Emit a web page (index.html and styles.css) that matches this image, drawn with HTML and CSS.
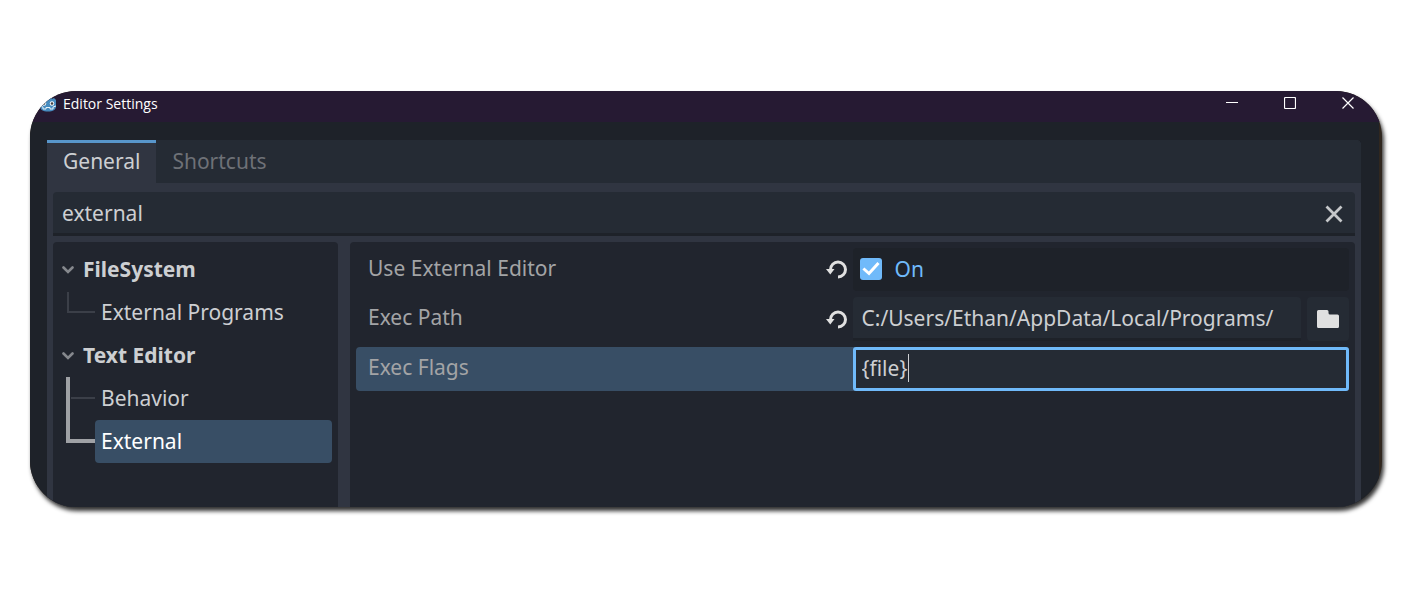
FILE: index.html
```html
<!DOCTYPE html>
<html lang="en">
<head>
<meta charset="utf-8">
<title>Editor Settings</title>
<link rel="stylesheet" href="styles.css">
</head>
<body>
<main class="window">
  <header class="titlebar">
    <svg class="logo" width="18" height="18" viewBox="0 0 18 18" aria-hidden="true">
      <path d="M1 5 3 3l2 1 1-2.500 2.500 1h1l2.500-1L13 4l2-1 2 2v6c0 4-3 5.500-8 5.500S1 15 1 11z" fill="#478cbf"/>
      <path d="M1 11l3 1v2h3v-1.500h4V14h3v-2l3-1" fill="none" stroke="#e6f1f8" stroke-width="1"/>
      <circle cx="5" cy="8.500" r="2.200" fill="#fff"/><circle cx="13" cy="8.500" r="2.200" fill="#fff"/>
      <circle cx="5" cy="8.500" r="1.300" fill="#414042"/><circle cx="13" cy="8.500" r="1.300" fill="#414042"/>
    </svg>
    <h1 class="title">Editor Settings</h1>
    <button class="winbtn" aria-label="Minimize"><svg width="12" height="12" viewBox="0 0 12 12"><path d="M0 5.500h12" stroke="#fff"/></svg></button>
    <button class="winbtn" aria-label="Maximize"><svg width="12" height="12" viewBox="0 0 12 12"><rect x=".5" y=".5" width="11" height="11" rx="1" fill="none" stroke="#fff" stroke-width="1.200"/></svg></button>
    <button class="winbtn" aria-label="Close"><svg width="12" height="12" viewBox="0 0 12 12"><path d="M.5.5l11 11M11.500.5l-11 11" stroke="#fff" stroke-width="1.200"/></svg></button>
  </header>
  <div class="body">
    <section class="panel">
      <nav class="tabs">
        <button class="tab active">General</button>
        <button class="tab">Shortcuts</button>
      </nav>
      <div class="content">
        <div class="search">
          <input class="search-input" type="text" aria-label="Filter settings" value="external">
          <button class="clear" aria-label="Clear"><svg width="18" height="18" viewBox="0 0 18 18"><path d="M1.500 1.500l15 15M16.500 1.500l-15 15" stroke="#c6c8ca" stroke-width="2.800"/></svg></button>
        </div>
        <div class="split">
          <ul class="tree">
            <li>
              <button class="node group"><svg class="chevron" width="12" height="8" viewBox="0 0 12 8"><path d="M1.500 1.500L6 6l4.500-4.500" fill="none" stroke="#85888d" stroke-width="2.600" stroke-linecap="round"/></svg>FileSystem</button>
              <ul class="branch">
                <li class="leaf"><svg class="guide" width="29" height="43" viewBox="0 0 29 43"><path d="M2 1v20h27" fill="none" stroke="#3b3f48" stroke-width="2"/></svg><button class="node item">External Programs</button></li>
              </ul>
            </li>
            <li>
              <button class="node group"><svg class="chevron" width="12" height="8" viewBox="0 0 12 8"><path d="M1.500 1.500L6 6l4.500-4.500" fill="none" stroke="#85888d" stroke-width="2.600" stroke-linecap="round"/></svg>Text Editor</button>
              <ul class="branch">
                <li class="leaf"><svg class="guide" width="29" height="43" viewBox="0 0 29 43"><path d="M5 21h24" stroke="#3b3f48" stroke-width="2"/><path d="M2 0v43" stroke="#9fa1a5" stroke-width="4"/></svg><button class="node item">Behavior</button></li>
                <li class="leaf"><svg class="guide" width="29" height="43" viewBox="0 0 29 43"><path d="M2 0v21h27" fill="none" stroke="#9fa1a5" stroke-width="4"/></svg><button class="node item selected">External</button></li>
              </ul>
            </li>
          </ul>
          <div class="properties">
            <div class="row">
              <div class="name"><label for="use">Use External Editor</label>
                <button class="revert" aria-label="Revert Use External Editor"><svg width="21" height="20" viewBox="0 0 21 20"><path d="M4.500 10.500a7.500 7.500 0 1 1 7.500 7.500" fill="none" stroke="#e0e0e0" stroke-width="3"/><path d="M0 10h8.500l-4.200 5.500z" fill="#e0e0e0"/></svg></button></div>
              <div class="check"><input id="use" class="box" type="checkbox" checked><label for="use">On</label></div>
            </div>
            <div class="row tall">
              <div class="name"><label for="path">Exec Path</label>
                <button class="revert" aria-label="Revert Exec Path"><svg width="21" height="20" viewBox="0 0 21 20"><path d="M4.500 10.500a7.500 7.500 0 1 1 7.500 7.500" fill="none" stroke="#e0e0e0" stroke-width="3"/><path d="M0 10h8.500l-4.200 5.500z" fill="#e0e0e0"/></svg></button></div>
              <div class="path"><input id="path" class="field" type="text" value="C:/Users/Ethan/AppData/Local/Programs/"><button class="browse" aria-label="Browse"><svg width="22" height="18" viewBox="0 0 22 18"><path d="M1.500 0H10q1.500 0 1.500 1.500V3q0 1.500 1.500 1.500h7.500Q22 4.500 22 6v10.500q0 1.500-1.500 1.500h-19Q0 18 0 16.500v-15Q0 0 1.500 0z" fill="#e0e0e0"/></svg></button></div>
            </div>
            <div class="row tall current">
              <div class="name"><label for="flags">Exec Flags</label></div>
              <div class="editing"><input id="flags" class="field focused" type="text" value="{file}"><span class="caret"></span></div>
            </div>
          </div>
        </div>
      </div>
    </section>
  </div>
</main>
</body>
</html>
```
FILE: styles.css
```css
* { box-sizing: border-box; }

body {
  margin: 0;
  min-height: 100vh;
  padding: 91px 29px 92px 30px;
  display: flex;
  background: #fff;
  color: #cdcfd2;
  font: 21px/30px "Noto Sans", sans-serif;
}

button, input {
  margin: 0;
  border: 0;
  padding: 0;
  background: none;
  color: inherit;
  font: inherit;
  outline: none;
}

button { cursor: pointer; }
svg { display: block; flex: none; }
ul { list-style: none; margin: 0; padding: 0; }

.window {
  flex: 1;
  min-width: 0;
  display: flex;
  flex-direction: column;
  overflow: hidden;
  border-radius: 46px;
  background: #30271f;
  box-shadow: 2px 4px 4px #333;
}

.titlebar {
  height: 31px;
  display: flex;
  align-items: center;
  padding: 0 5px 6px 9px;
  background: #261a33;
  color: #fff;
}

.title {
  flex: 1;
  margin: 0 0 0 6px;
  font: 14px/20px "Open Sans", sans-serif;
}

.winbtn {
  width: 58px;
  height: 24px;
  display: flex;
  align-items: center;
  justify-content: center;
  padding-bottom: 2px;
}

.body {
  flex: 1;
  display: flex;
  margin-right: 3px;
  padding: 18px 18px 0 17px;
  background: #1e2229;
}

.panel {
  flex: 1;
  min-width: 0;
  display: flex;
  flex-direction: column;
  overflow: hidden;
  border-radius: 0 5px 0 0;
  background: #303541;
}

.tabs {
  display: flex;
  background: #252b34;
}

.tab {
  height: 43px;
  padding: 0 16px 4px;
  border-top: 3px solid transparent;
  color: #6e7177;
}

.tab.active {
  border-color: #5896cb;
  background: #303541;
  color: #cdcfd2;
}

.content {
  flex: 1;
  display: flex;
  flex-direction: column;
  gap: 6px;
  padding: 9px 6px 0;
}

.search {
  height: 44px;
  display: flex;
  align-items: center;
  padding: 0 12px 0 9px;
  border-bottom: 3px solid #1e2229;
  border-radius: 4px 4px 0 0;
  background: #252b34;
}

.search-input { flex: 1; min-width: 0; }
.clear { padding-top: 2px; }

.split {
  flex: 1;
  display: flex;
  gap: 12px;
}

.tree {
  width: 285px;
  padding: 6px;
  border-radius: 4px 4px 0 0;
  background: #21252e;
}

.node {
  height: 43px;
  display: flex;
  align-items: center;
  padding-bottom: 2px;
  text-align: left;
}

.group { gap: 9px; padding-left: 3px; font-weight: 700; }
.chevron { margin-top: 2px; }
.branch { padding-left: 7px; }
.leaf { display: flex; }
.item { flex: 1; padding-left: 6px; border-radius: 4px; }
.selected { background: #384e65; color: #fff; }

.properties {
  flex: 1;
  min-width: 0;
  display: flex;
  flex-direction: column;
  gap: 6px;
  padding: 6px;
  border-radius: 4px 4px 0 0;
  background: #21252e;
}

.row {
  height: 43px;
  display: grid;
  grid-template-columns: 1fr 1fr;
  border-radius: 4px;
}

.tall { height: 44px; }
.current { background: #384e65; }

.name {
  display: flex;
  align-items: center;
  justify-content: space-between;
  padding: 0 6px 4px 12px;
  color: #a3a4a6;
}

.revert { padding-top: 3px; }

.check {
  display: flex;
  align-items: center;
  gap: 13px;
  padding: 0 7px 1px;
  border-radius: 4px;
  background: #1e2229;
  color: #70bafa;
}

.box {
  appearance: none;
  width: 22px;
  height: 22px;
  border-radius: 3px;
  background: #70bafa url("data:image/svg+xml,%3Csvg xmlns='http://www.w3.org/2000/svg' viewBox='0 0 22 22'%3E%3Cpath d='M4.500 11.500l4.500 4 8.500-9.500' fill='none' stroke='white' stroke-width='3' stroke-linecap='square'/%3E%3C/svg%3E");
}

.path { display: flex; gap: 6px; }

.field {
  flex: 1;
  min-width: 0;
  width: 100%;
  height: 44px;
  padding: 0 9px;
  border-bottom: 3px solid #1e2229;
  border-radius: 4px 4px 0 0;
  background: #252b34;
}

.browse {
  width: 42px;
  display: flex;
  align-items: center;
  justify-content: center;
  border-radius: 4px;
  background: #252b34;
}

.editing { position: relative; }

.focused {
  padding: 0 6px 2px;
  border: 3px solid #70bafa;
  border-radius: 3px;
}

.caret {
  position: absolute;
  left: 55px;
  top: 7px;
  width: 1px;
  height: 28px;
  background: #cdcfd2;
}
```
